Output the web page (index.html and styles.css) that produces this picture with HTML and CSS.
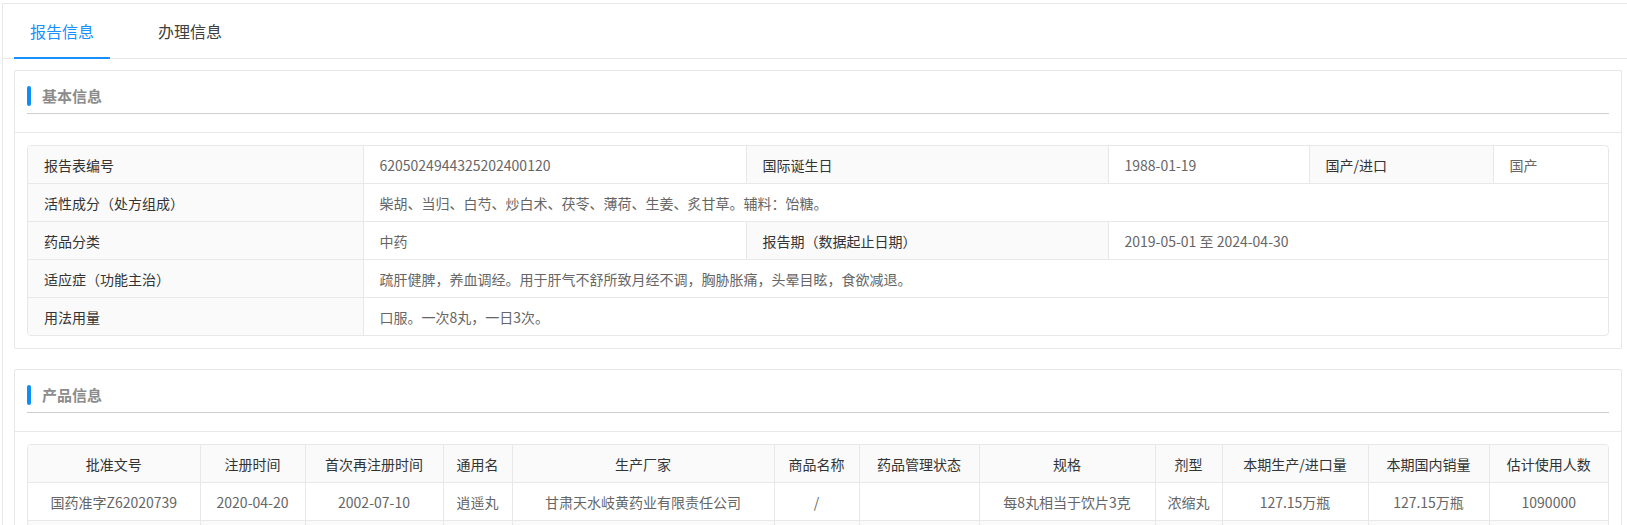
FILE: index.html
```html
<!DOCTYPE html>
<html lang="zh-CN">
<head>
<meta charset="utf-8">
<title>报告信息</title>
<link rel="stylesheet" href="styles.css">
</head>
<body>
<div class="page">
  <div class="tabs">
    <div class="tab active">报告信息</div>
    <div class="tab">办理信息</div>
  </div>

  <section class="card">
    <div class="card-header">
      <div class="title-row"><span class="bar"></span><span class="title">基本信息</span></div>
    </div>
    <div class="card-body">
      <div class="tbl-wrap">
        <table class="desc">
          <colgroup>
            <col class="c1"><col class="c2"><col class="c3"><col class="c4"><col class="c5"><col class="c6">
          </colgroup>
          <tr>
            <td class="lbl">报告表编号</td>
            <td class="val">6205024944325202400120</td>
            <td class="lbl">国际诞生日</td>
            <td class="val">1988-01-19</td>
            <td class="lbl">国产/进口</td>
            <td class="val">国产</td>
          </tr>
          <tr>
            <td class="lbl">活性成分（处方组成）</td>
            <td class="val" colspan="5">柴胡、当归、白芍、炒白术、茯苓、薄荷、生姜、炙甘草。辅料：饴糖。</td>
          </tr>
          <tr>
            <td class="lbl">药品分类</td>
            <td class="val">中药</td>
            <td class="lbl">报告期（数据起止日期）</td>
            <td class="val" colspan="3">2019-05-01 至 2024-04-30</td>
          </tr>
          <tr>
            <td class="lbl">适应症（功能主治）</td>
            <td class="val" colspan="5">疏肝健脾，养血调经。用于肝气不舒所致月经不调，胸胁胀痛，头晕目眩，食欲减退。</td>
          </tr>
          <tr class="last">
            <td class="lbl">用法用量</td>
            <td class="val" colspan="5">口服。一次8丸，一日3次。</td>
          </tr>
        </table>
      </div>
    </div>
  </section>

  <section class="card card2">
    <div class="card-header">
      <div class="title-row"><span class="bar"></span><span class="title">产品信息</span></div>
    </div>
    <div class="card-body">
      <div class="tbl-wrap">
        <table class="grid">
          <colgroup>
            <col class="p1"><col class="p2"><col class="p3"><col class="p4"><col class="p5"><col class="p6">
            <col class="p7"><col class="p8"><col class="p9"><col class="p10"><col class="p11"><col class="p12">
          </colgroup>
          <thead>
            <tr>
              <th>批准文号</th><th>注册时间</th><th>首次再注册时间</th><th>通用名</th><th>生产厂家</th><th>商品名称</th>
              <th>药品管理状态</th><th>规格</th><th>剂型</th><th>本期生产/进口量</th><th>本期国内销量</th><th>估计使用人数</th>
            </tr>
          </thead>
          <tbody>
            <tr>
              <td>国药准字Z62020739</td><td>2020-04-20</td><td>2002-07-10</td><td>逍遥丸</td><td>甘肃天水岐黄药业有限责任公司</td><td>/</td>
              <td></td><td>每8丸相当于饮片3克</td><td>浓缩丸</td><td>127.15万瓶</td><td>127.15万瓶</td><td>1090000</td>
            </tr>
            <tr class="stripe">
              <td></td><td></td><td></td><td></td><td></td><td></td><td></td><td></td><td></td><td></td><td></td><td></td>
            </tr>
          </tbody>
        </table>
      </div>
    </div>
  </section>
</div>
</body>
</html>
```

FILE: styles.css
```css
html, body {
  margin: 0;
  padding: 0;
  overflow: hidden;
  background: #fff;
}
body {
  padding: 3px 0 0 2px;
  font-family: "Noto Sans CJK SC", "Microsoft YaHei", sans-serif;
  color: #333;
}
.page {
  border: 1px solid #e8e8e8;
  border-right: none;
  padding: 0 5px 0 11px;
  min-height: 600px;
}
.tabs {
  display: flex;
  height: 54px;
  border-bottom: 1px solid #e8e8e8;
  margin-left: -11px;
  margin-right: -5px;
  padding-left: 11px;
}
.tab {
  padding: 0 16px;
  margin-right: 32px;
  font-size: 16px;
  line-height: 54px;
  color: #404040;
  position: relative;
}
.tab.active {
  color: #1890ff;
}
.tab.active::after {
  content: "";
  position: absolute;
  left: 0;
  right: 0;
  bottom: -1px;
  height: 2px;
  background: #1890ff;
}
.card {
  margin-top: 11px;
  border: 1px solid #e8e8e8;
  border-radius: 2px;
  background: #fff;
}
.card2 {
  margin-top: 20px;
}
.card-header {
  padding: 15px 12px 18px;
  border-bottom: 1px solid #e8e8e8;
}
.title-row {
  display: flex;
  align-items: center;
  height: 20px;
  padding-bottom: 7px;
  border-bottom: 1px solid #cfcfcf;
}
.bar {
  width: 4px;
  height: 20px;
  border-radius: 2px;
  background: #0d8ff5;
  margin-right: 11px;
}
.title {
  font-size: 15px;
  font-weight: bold;
  color: #8c8c8c;
  line-height: 20px;
}
.card-body {
  padding: 12px 12px 12px 12px;
}
.tbl-wrap {
  border: 1px solid #e8e8e8;
  border-radius: 4px;
  overflow: hidden;
}
table {
  width: 100%;
  border-collapse: collapse;
  table-layout: fixed;
  font-size: 14px;
}
td, th {
  height: 37px;
  padding: 0;
  border-right: 1px solid #e8e8e8;
  border-bottom: 1px solid #e8e8e8;
  white-space: nowrap;
  overflow: hidden;
}
td:last-child, th:last-child {
  border-right: none;
}
tr.last td, tr.stripe td {
  border-bottom: none;
}
.desc td {
  padding-left: 16px;
  text-align: left;
}
.desc .lbl {
  background: #fafafa;
  color: #333;
}
.desc .val {
  color: #666;
}
.c1 { width: 335px; }
.c2 { width: 383px; }
.c3 { width: 362px; }
.c4 { width: 201px; }
.c5 { width: 184px; }
.grid th {
  background: #fafafa;
  font-weight: normal;
  color: #333;
  text-align: center;
}
.grid td {
  color: #666;
  text-align: center;
}
.grid tr.stripe td {
  background: #fafafa;
}
.p1 { width: 172px; }
.p2 { width: 105px; }
.p3 { width: 138px; }
.p4 { width: 69px; }
.p5 { width: 262px; }
.p6 { width: 85px; }
.p7 { width: 120px; }
.p8 { width: 176px; }
.p9 { width: 67px; }
.p10 { width: 146px; }
.p11 { width: 121px; }
```
